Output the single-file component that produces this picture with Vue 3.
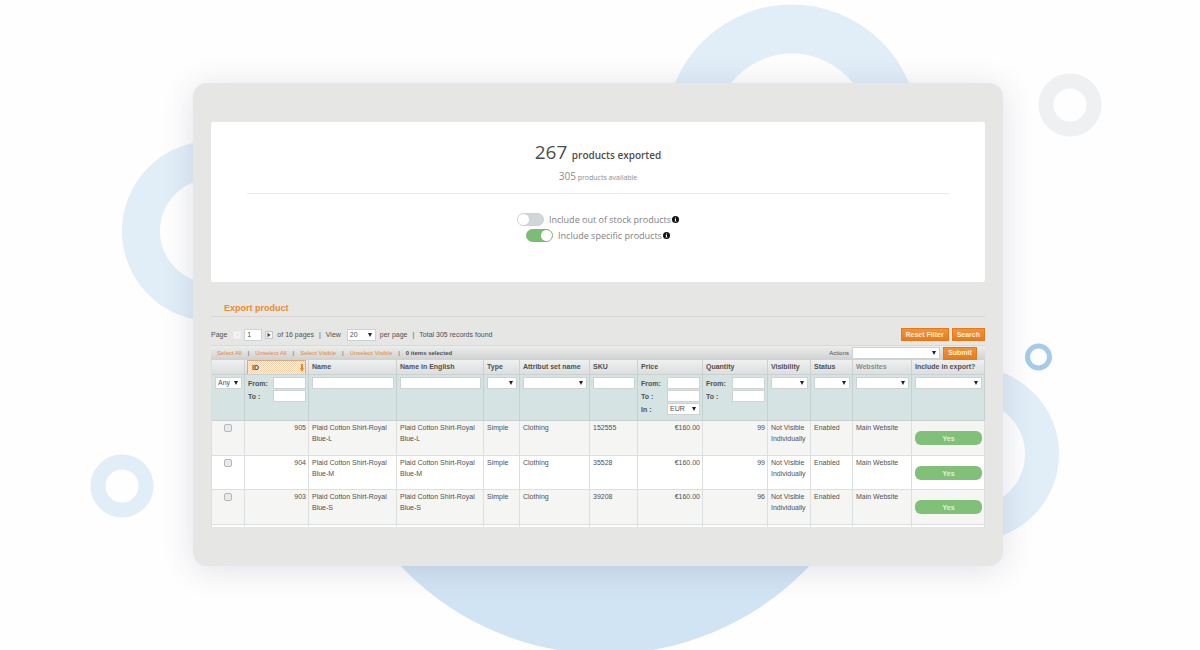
<script setup>
import { ref } from 'vue'

const columns = [
  { key: 'pick', label: '', width: 33, filter: 'any' },
  { key: 'id', label: 'ID', width: 64, filter: 'range', sorted: true },
  { key: 'name', label: 'Name', width: 88, filter: 'text' },
  { key: 'nameEn', label: 'Name in English', width: 87, filter: 'text' },
  { key: 'type', label: 'Type', width: 36, filter: 'select' },
  { key: 'set', label: 'Attribut set name', width: 70, filter: 'select' },
  { key: 'sku', label: 'SKU', width: 48, filter: 'text' },
  { key: 'price', label: 'Price', width: 65, filter: 'money' },
  { key: 'qty', label: 'Quantity', width: 65, filter: 'range' },
  { key: 'visibility', label: 'Visibility', width: 43, filter: 'select' },
  { key: 'status', label: 'Status', width: 42, filter: 'select' },
  { key: 'website', label: 'Websites', width: 59, filter: 'select', muted: true },
  { key: 'include', label: 'Include in export?', width: 73, filter: 'select' },
]

const rows = [
  { id: '905', size: 'L', sku: '152555', qty: '99' },
  { id: '904', size: 'M', sku: '35528', qty: '99' },
  { id: '903', size: 'S', sku: '39208', qty: '96' },
].map((r) => ({
  id: r.id,
  name: `Plaid Cotton Shirt-Royal Blue-${r.size}`,
  nameEn: `Plaid Cotton Shirt-Royal Blue-${r.size}`,
  type: 'Simple',
  set: 'Clothing',
  sku: r.sku,
  price: '€160.00',
  qty: r.qty,
  visibility: 'Not Visible Individually',
  status: 'Enabled',
  website: 'Main Website',
}))

const numeric = ['id', 'price', 'qty']
const outOfStock = ref(false)
const specific = ref(true)
const page = ref('1')
</script>

<template>
  <div class="stage">
    <svg class="decor" viewBox="0 0 1200 650" preserveAspectRatio="xMidYMin slice" aria-hidden="true">
      <circle cx="605" cy="373" r="281" fill="#d1e4f4" />
      <g fill="none" stroke="#e1eef8">
        <circle cx="212" cy="231" r="71" stroke-width="38" />
        <circle cx="792" cy="131" r="102" stroke-width="49" />
        <circle cx="972" cy="454" r="70" stroke-width="34" />
        <circle cx="122" cy="486" r="24" stroke-width="15" />
      </g>
      <circle cx="1070" cy="105" r="24" fill="none" stroke="#eff0f2" stroke-width="15" />
      <circle cx="1038.5" cy="357" r="11" fill="none" stroke="#a5cbea" stroke-width="5" />
    </svg>

    <main class="card">
      <section class="summary">
        <h1><span class="total">267</span> products exported</h1>
        <p class="available"><span class="count">305</span> products available</p>
        <div class="switches">
          <label class="switch">
            <input v-model="outOfStock" type="checkbox" />
            <span>Include out of stock products</span>
            <svg class="info" viewBox="0 0 14 14" aria-hidden="true">
              <circle cx="7" cy="7" r="7" fill="#111" />
              <path d="M5 6h3v4h1v1H5v-1h1V7H5zM6 3h2v2H6z" fill="#fff" />
            </svg>
          </label>
          <label class="switch">
            <input v-model="specific" type="checkbox" />
            <span>Include specific products</span>
            <svg class="info" viewBox="0 0 14 14" aria-hidden="true">
              <circle cx="7" cy="7" r="7" fill="#111" />
              <path d="M5 6h3v4h1v1H5v-1h1V7H5zM6 3h2v2H6z" fill="#fff" />
            </svg>
          </label>
        </div>
      </section>

      <h2>Export product</h2>

      <div class="pager">
        <label for="page">Page</label>
        <button class="step off" type="button" aria-label="Previous page" disabled>
          <svg viewBox="0 0 8 8"><path d="M5 2v4L3 4z" fill="#d8d8d6" /></svg>
        </button>
        <input id="page" v-model="page" class="page" type="text" />
        <button class="step" type="button" aria-label="Next page">
          <svg viewBox="0 0 8 8"><path d="M2 1v6l4-3z" fill="#444" /></svg>
        </button>
        <span>of 16 pages</span>
        <span class="bar">|</span>
        <label for="view">View</label>
        <select id="view" class="view"><option>20</option></select>
        <span>per page</span>
        <span class="bar">|</span>
        <span>Total 305 records found</span>
        <div class="buttons">
          <button class="orange" type="button">Reset Filter</button>
          <button class="orange" type="button">Search</button>
        </div>
      </div>

      <div class="mass">
        <a href="#">Select All</a><span>|</span>
        <a href="#">Unselect All</a><span>|</span>
        <a href="#">Select Visible</a><span>|</span>
        <a href="#">Unselect Visible</a><span>|</span>
        <strong>0 items selected</strong>
        <div class="actions">
          <label for="action">Actions</label>
          <select id="action"><option></option></select>
          <button class="orange" type="button">Submit</button>
        </div>
      </div>

      <table>
        <colgroup>
          <col v-for="c in columns" :key="c.key" :style="{ width: c.width / 7.73 + '%' }" />
        </colgroup>
        <thead>
          <tr class="head">
            <th v-for="c in columns" :key="c.key" scope="col" :class="{ sorted: c.sorted, muted: c.muted }">
              <div>
                {{ c.label }}
                <svg v-if="c.sorted" viewBox="0 0 4 8" aria-hidden="true">
                  <path d="M1 0h2v4h1L2 8 0 4h1z" fill="#ee8420" />
                </svg>
              </div>
            </th>
          </tr>
          <tr class="filters">
            <td v-for="c in columns" :key="c.key">
              <select v-if="c.filter === 'any'" class="any" aria-label="Selection"><option>Any</option></select>
              <input v-else-if="c.filter === 'text'" type="text" :aria-label="c.label" />
              <select v-else-if="c.filter === 'select'" :aria-label="c.label"><option></option></select>
              <div v-else class="range">
                <label :for="c.key + '-from'">From:</label><input :id="c.key + '-from'" type="text" />
                <label :for="c.key + '-to'">To :</label><input :id="c.key + '-to'" type="text" />
                <template v-if="c.filter === 'money'">
                  <label for="currency">In :</label>
                  <select id="currency"><option>EUR</option></select>
                </template>
              </div>
            </td>
          </tr>
        </thead>
        <tbody>
          <tr v-for="r in rows" :key="r.id">
            <td v-for="c in columns" :key="c.key" :class="[c.key, { num: numeric.includes(c.key) }]">
              <input v-if="c.key === 'pick'" type="checkbox" :aria-label="'Select ' + r.id" />
              <button v-else-if="c.key === 'include'" class="yes" type="button">Yes</button>
              <template v-else>{{ r[c.key] }}</template>
            </td>
          </tr>
          <tr class="rest"><td v-for="c in columns" :key="c.key"></td></tr>
        </tbody>
      </table>
    </main>
  </div>
</template>

<style>
body {
  background: #fefefe;
}
</style>

<style scoped>
* {
  box-sizing: border-box;
}
.stage {
  position: relative;
  min-height: 100vh;
  padding: 83px 197px 83px 193px;
  overflow: hidden;
  font: 7px/11px "Liberation Sans", Arial, sans-serif;
  color: #505050;
}
.decor {
  position: absolute;
  inset: 0;
  width: 100%;
  height: 100%;
}
.card {
  position: relative;
  padding: 39px 18px;
  border-radius: 14px;
  background: #e6e6e4;
  box-shadow: 0 4px 32px rgba(40, 50, 90, 0.14);
}
button,
input,
select {
  margin: 0;
  font: inherit;
  color: inherit;
}
.summary {
  height: 160px;
  padding: 19px 36px 0;
  border-radius: 2px;
  background: #fff;
  font-family: "Open Sans", sans-serif;
  text-align: center;
}
h1 {
  margin: 0;
  font-size: 10px;
  line-height: 22px;
  font-weight: 600;
  color: #4d4d4d;
}
.total {
  margin-right: 2px;
  font-size: 19px;
  font-weight: 400;
}
.available {
  margin: 0;
  padding: 3px 0 8px;
  border-bottom: 1px solid #ebebeb;
  font-size: 7px;
  line-height: 14px;
  color: #8c8c8c;
}
.count {
  font-size: 10px;
}
.switches {
  display: flex;
  flex-direction: column;
  align-items: center;
  padding-top: 17px;
}
.switch {
  display: flex;
  align-items: center;
  height: 16px;
  font-size: 9px;
  color: #828282;
}
.switch input {
  appearance: none;
  width: 27px;
  height: 13px;
  margin-right: 5px;
  border: 1px solid #cdd0d2;
  border-radius: 7px;
  background: #d3d6d8;
}
.switch input::before {
  content: "";
  display: block;
  width: 11px;
  height: 11px;
  border-radius: 50%;
  background: #fff;
}
.switch input:checked {
  border-color: #82b37e;
  background: #7cbd74;
}
.switch input:checked::before {
  margin-left: auto;
}
.info {
  width: 7px;
  height: 7px;
  margin-left: 1px;
}
h2 {
  margin: 19px 0 0;
  padding-left: 13px;
  border-bottom: 1px solid #d6d6d4;
  font-size: 9px;
  line-height: 15px;
  font-weight: 700;
  color: #ec8a2d;
}
.pager {
  display: flex;
  align-items: center;
  height: 28px;
  padding-top: 7px;
}
.pager input,
.pager select,
.mass select,
.filters input,
.filters select {
  appearance: none;
  display: block;
  height: 12px;
  padding: 0 2px;
  border: 1px solid #cdd3d3;
  border-radius: 0;
  background: #fff;
  line-height: 10px;
}
.pager select,
.mass select,
.filters select {
  background: #fff url("data:image/svg+xml,%3Csvg xmlns='http://www.w3.org/2000/svg' viewBox='0 0 4 4'%3E%3Cpath d='M0 0h4L2 4z' fill='%23222'/%3E%3C/svg%3E") no-repeat right 3px center / 4px 4px;
}
.step {
  display: flex;
  width: 8px;
  height: 8px;
  padding: 0;
  border: 1px solid #c4c8c8;
  background: #f4f4f3;
}
.step.off {
  margin-left: 6px;
  border-color: #ecece9;
}
.pager .page {
  width: 18px;
  margin: 0 3px;
}
.step + span {
  margin-left: 4px;
}
.bar {
  margin: 0 5px;
}
.pager .view {
  width: 29px;
  margin: 0 4px 0 6px;
}
.buttons,
.actions {
  display: flex;
  align-items: center;
  gap: 3px;
  margin-left: auto;
}
.orange {
  height: 13px;
  padding: 0 4px;
  border: 1px solid #e2791c;
  background: linear-gradient(#f2933a, #e57c1b);
  font-size: 7px;
  font-weight: 700;
  line-height: 10px;
  color: #fdeedd;
}
.mass {
  display: flex;
  align-items: center;
  gap: 6px;
  height: 15px;
  padding: 0 8px 0 6px;
  border-top: 1px solid #d8dada;
  background: linear-gradient(#eceded, #cfd1d1);
  font-size: 6px;
}
.mass a {
  color: #ea8630;
  text-decoration: none;
}
.mass select {
  width: 88px;
}
.mass .orange {
  width: 34px;
}
table {
  width: 100%;
  border-left: 1px solid #dcdfe0;
  table-layout: fixed;
  border-collapse: separate;
  border-spacing: 0;
}
th,
td {
  padding: 2px 3px;
  border-right: 1px solid #dcdfe0;
  border-bottom: 1px solid #dcdfe0;
  vertical-align: top;
  text-align: left;
}
.head th {
  height: 15px;
  padding: 0 0 0 3px;
  border-color: #ccd0d0;
  background: linear-gradient(#eff0f0, #dcdedf);
  line-height: 14px;
  white-space: nowrap;
}
.head .sorted {
  padding: 0 2px;
}
.head .muted {
  color: #8b8b8b;
}
.sorted div {
  display: flex;
  align-items: center;
  justify-content: space-between;
  padding: 0 1px 0 4px;
  border: 1px solid #d9a982;
  border-bottom: 0;
  background: repeating-conic-gradient(#f7cfaa 0 25%, #fdf8f3 0 50%) 0 0 / 2px 2px;
  line-height: 13px;
}
.sorted svg {
  width: 4px;
  height: 8px;
}
.filters td {
  height: 46px;
  padding-right: 2px;
  border-color: #c5cfcf;
  background: #d5e3e2;
}
.filters input,
.filters select {
  width: 100%;
}
.range {
  display: grid;
  grid-template-columns: 1fr 33px;
  row-gap: 1px;
  align-items: center;
  font-weight: 700;
}
.range select {
  font-weight: 400;
}
tbody td {
  height: 35px;
  padding-top: 1px;
  background: #f5f5f4;
}
tbody tr:nth-child(even) td {
  height: 34px;
  background: #fff;
}
tbody .num {
  padding-right: 2px;
  text-align: right;
}
.pick {
  text-align: center;
}
.pick input {
  appearance: none;
  width: 8px;
  height: 8px;
  margin-top: 2px;
  border: 1px solid #b4b7b9;
  border-radius: 2px;
  background: #e8e9ea;
}
tbody .visibility,
tbody .status {
  padding-right: 0;
}
tbody .include {
  padding: 10px 2px 0 3px;
}
.yes {
  display: block;
  width: 100%;
  height: 14px;
  padding: 0;
  border: 0;
  border-radius: 6px;
  background: #80c078;
  font-weight: 700;
  color: #e0f0dd;
}
tbody tr.rest td {
  height: 2px;
  padding: 0;
  border-bottom: 0;
}
</style>
